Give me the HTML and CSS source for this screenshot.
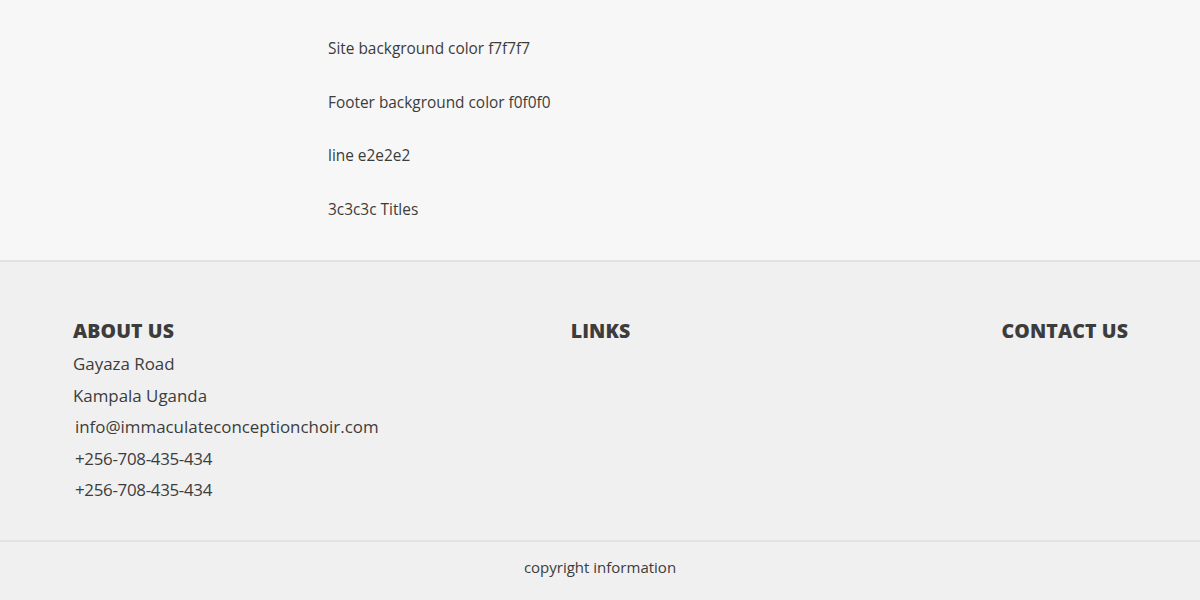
FILE: index.html
```html
<!DOCTYPE html>
<html lang="en">
<head>
<meta charset="utf-8">
<title>Footer</title>
<link rel="stylesheet" href="styles.css">
</head>
<body>
<main class="site">
  <div class="notes">
    <p class="note">Site background color f7f7f7</p>
    <p class="note">Footer background color f0f0f0</p>
    <p class="note">line e2e2e2</p>
    <p class="note">3c3c3c Titles</p>
  </div>
</main>
<footer class="footer">
  <div class="footer-cols">
    <section class="col col-about">
      <h3 class="col-title">ABOUT US</h3>
      <ul class="info">
        <li>Gayaza Road</li>
        <li>Kampala Uganda</li>
        <li class="indent">info@immaculateconceptionchoir.com</li>
        <li class="indent phone">+256-708-435-434</li>
        <li class="indent phone">+256-708-435-434</li>
      </ul>
    </section>
    <section class="col col-links">
      <h3 class="col-title">LINKS</h3>
    </section>
    <section class="col col-contact">
      <h3 class="col-title">CONTACT US</h3>
    </section>
  </div>
  <div class="copyright">copyright information</div>
</footer>
</body>
</html>
```

FILE: styles.css
```css
* { box-sizing: border-box; }
html, body { margin: 0; padding: 0; }
body {
  font-family: "Open Sans", "Liberation Sans", sans-serif;
  color: #3c3c3c;
  background: #f0f0f0;
}
.site {
  background: #f7f7f7;
  height: 262px;
  border-bottom: 2px solid #e2e2e2;
  padding: 38px 0 0 328px;
}
.note {
  margin: 0 0 31.5px;
  font-size: 15.4px;
  line-height: 22px;
  color: #3c3c3c;
}
.footer { background: #f0f0f0; }
.footer-cols {
  display: grid;
  grid-template-columns: 1fr auto 1fr;
  padding: 57px 72px 34px 73px;
  border-bottom: 2px solid #e2e2e2;
  height: 280px;
}
.col-links { justify-self: center; }
.col-contact { justify-self: end; }
.col-title {
  margin: 0;
  font-size: 19.5px;
  line-height: 24px;
  font-weight: 800;
  letter-spacing: 0.1px;
  color: #3c3c3c;
}
.info {
  list-style: none;
  margin: 5px 0 0;
  padding: 0;
}
.info li {
  font-size: 16.9px;
  line-height: 31.5px;
  color: #3c3c3c;
}
.info .indent { padding-left: 2px; }
.info .phone { letter-spacing: -0.3px; }
.copyright {
  text-align: center;
  font-size: 15px;
  line-height: 20px;
  padding: 15px 0 23px;
  color: #3c3c3c;
}
```
